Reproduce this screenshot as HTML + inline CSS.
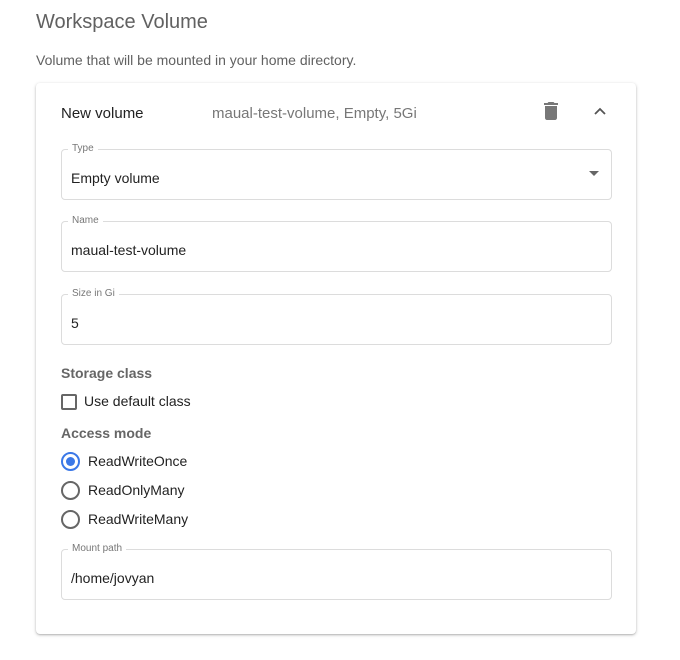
<!DOCTYPE html>
<html><head><style>
body{margin:0;background:#fff;font-family:"Liberation Sans",sans-serif;width:680px;height:660px;position:relative;overflow:hidden}
.a{position:absolute;white-space:nowrap}
.card{position:absolute;left:36px;top:83px;width:600px;height:551px;border-radius:4px;box-shadow:0 1px 3px rgba(0,0,0,.25),0 1px 1px rgba(0,0,0,.1)}
.f{position:absolute;left:61px;width:549px;height:49px;border:1px solid #dcdcdc;border-radius:4px}
.f .l{position:absolute;left:6px;top:-7px;background:#fff;padding:0 4px;font-size:10px;color:#777}
.f .v{position:absolute;left:9px;top:20px;font-size:14px;color:#222}
.r{position:absolute;left:61px;width:15px;height:15px;border:2px solid #666;border-radius:50%}
.rl{position:absolute;left:88px;font-size:14px;color:#222}
</style></head><body>
<div class="a" style="left:36px;top:11px;font-size:20px;color:#616161">Workspace Volume</div>
<div class="a" style="left:36px;top:52px;font-size:14px;color:#616161">Volume that will be mounted in your home directory.</div>
<div class="card"></div>
<div class="a" style="left:61px;top:105px;font-size:15px;color:#222">New volume</div>
<div class="a" style="left:212px;top:105px;font-size:15px;color:#777">maual-test-volume, Empty, 5Gi</div>
<svg class="a" style="left:543px;top:102px" width="16" height="18" viewBox="5 3 14 18"><path fill="#777" d="M6 19c0 1.1.9 2 2 2h8c1.1 0 2-.9 2-2V7H6v12zM19 4h-3.5l-1-1h-5l-1 1H5v2h14V4z"/></svg>
<svg class="a" style="left:593px;top:106px" width="14" height="10" viewBox="0 0 14 10"><path d="M2 8l5-5 5 5" stroke="#555" stroke-width="1.8" fill="none"/></svg>
<div class="f" style="top:149px"><span class="l">Type</span><span class="v">Empty volume</span>
<svg style="position:absolute;right:12px;top:21px" width="10" height="6"><path d="M0 0h10L5 5z" fill="#666"/></svg></div>
<div class="f" style="top:221px"><span class="l">Name</span><span class="v">maual-test-volume</span></div>
<div class="f" style="top:294px"><span class="l">Size in Gi</span><span class="v">5</span></div>
<div class="a" style="left:61px;top:365px;font-size:14px;font-weight:bold;color:#666">Storage class</div>
<div class="a" style="left:61px;top:394px;width:12px;height:12px;border:2px solid #666;border-radius:2px"></div>
<div class="a" style="left:84px;top:393px;font-size:14px;color:#222">Use default class</div>
<div class="a" style="left:61px;top:425px;font-size:14px;font-weight:bold;color:#666">Access mode</div>
<div class="r" style="top:452px;border-color:#3b78e7"><div style="position:absolute;left:3px;top:3px;width:9px;height:9px;border-radius:50%;background:#3b78e7"></div></div>
<div class="rl" style="top:453px">ReadWriteOnce</div>
<div class="r" style="top:481px"></div><div class="rl" style="top:482px">ReadOnlyMany</div>
<div class="r" style="top:510px"></div><div class="rl" style="top:511px">ReadWriteMany</div>
<div class="f" style="top:549px"><span class="l">Mount path</span><span class="v">/home/jovyan</span></div>
</body></html>
